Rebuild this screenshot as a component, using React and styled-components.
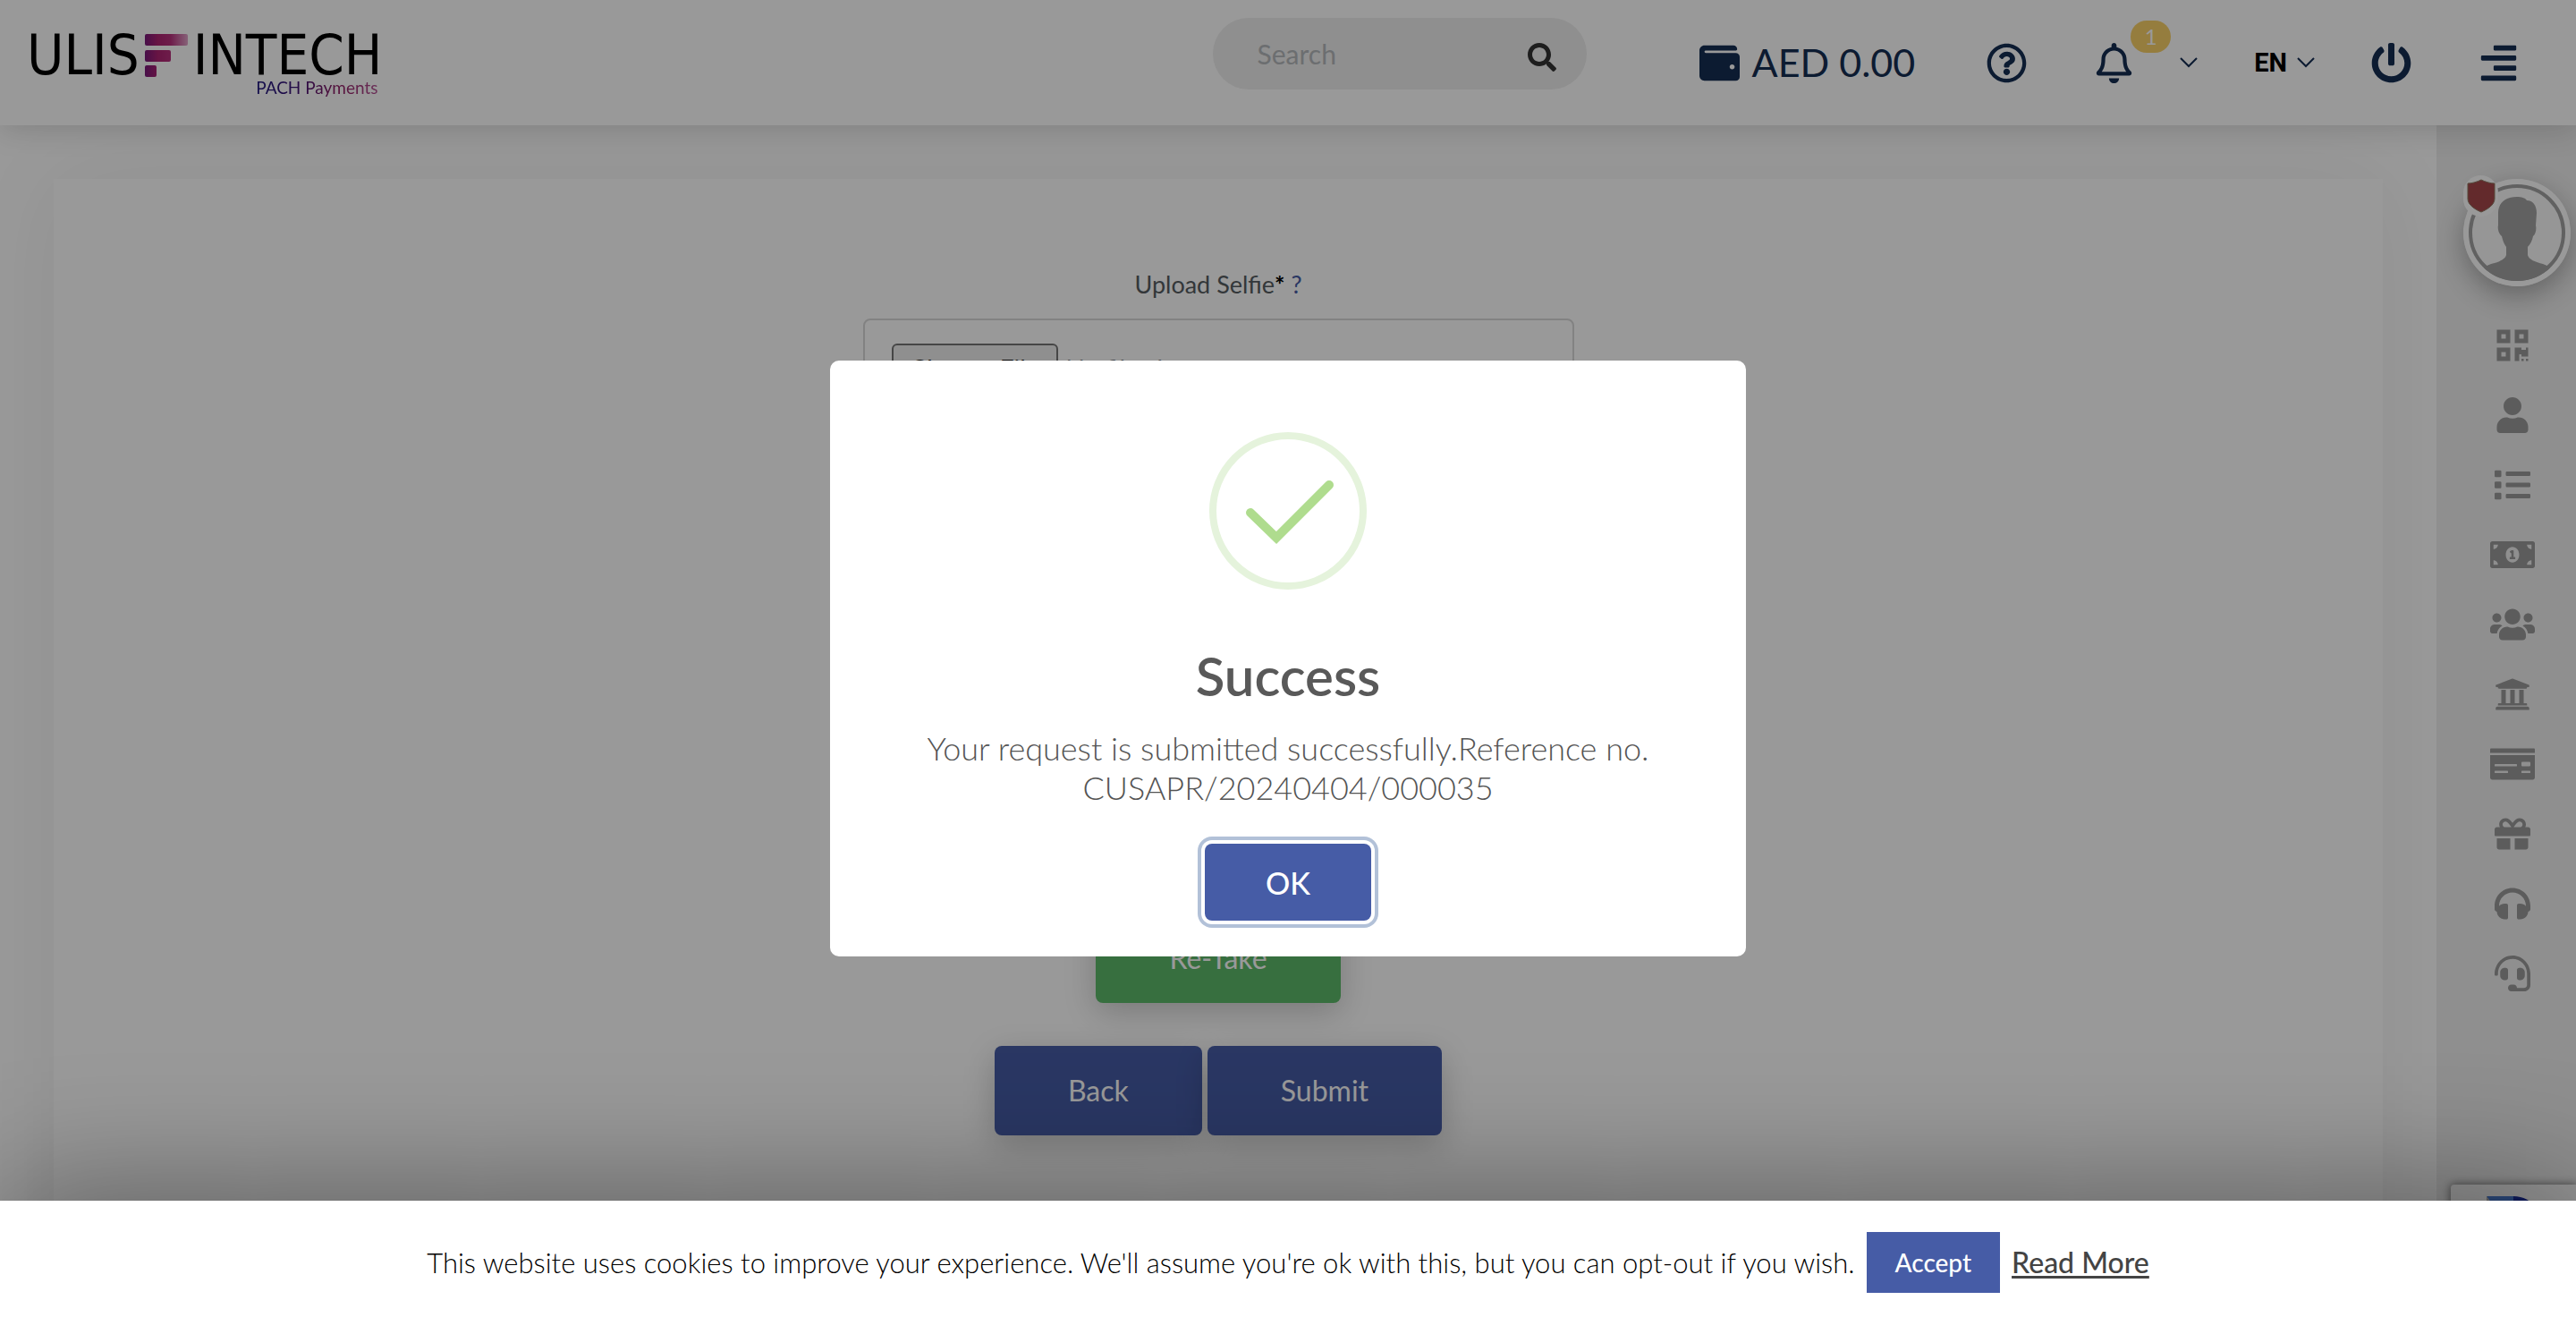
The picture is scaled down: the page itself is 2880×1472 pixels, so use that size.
import React from "react";
import styled, { createGlobalStyle } from "styled-components";
import {
  FaAlignRight,
  FaGift,
  FaHeadphones,
  FaHeadset,
  FaList,
  FaMoneyBillAlt,
  FaMoneyCheck,
  FaPowerOff,
  FaQrcode,
  FaRegBell,
  FaRegQuestionCircle,
  FaSearch,
  FaUniversity,
  FaUser,
  FaUsers,
  FaWallet,
} from "react-icons/fa";

const navy = "#142d53";
const accent = "#465ca6";

const GlobalStyle = createGlobalStyle`
  *, *::before, *::after { box-sizing: border-box; }
  body {
    margin: 0;
    overflow: hidden;
    background: #fff;
    font-family: Lato, "Open Sans", sans-serif;
    font-size: 28px;
  }
  button, input { font: inherit; }
  svg { display: block; flex: none; }
`;

const Page = styled.div`
  display: flex;
  flex-direction: column;
  height: 100vh;
  overflow: hidden;
`;

const Header = styled.header`
  position: relative;
  z-index: 1;
  flex: none;
  display: flex;
  align-items: center;
  height: 140px;
  padding: 0 64px 0 30px;
  background: #fff;
  color: ${navy};
  box-shadow: 0 4px 32px rgba(0, 0, 0, 0.16);
`;

const Brand = styled.a`
  display: flex;
  flex-direction: column;
  align-items: flex-end;
  color: #000;
  text-decoration: none;
`;

const BrandName = styled.span`
  display: flex;
  align-items: center;
  gap: 5px;
  height: 48px;
  margin-top: 8px;
  font: 63px/48px "DejaVu Sans Condensed", "Open Sans", sans-serif;
`;

const BrandTag = styled.span`
  padding-right: 5px;
  font: 19px/24px Lato, "Open Sans", sans-serif;
  color: transparent;
  background: linear-gradient(90deg, #211a80, #3a1378 30%, #8f1d63 65%, #b9579a);
  background-clip: text;
  -webkit-background-clip: text;
`;

const SearchBox = styled.label`
  align-self: flex-start;
  display: flex;
  align-items: center;
  width: 418px;
  height: 80px;
  margin: 20px 126px 0 auto;
  padding: 0 34px 0 50px;
  border-radius: 40px;
  background: #eee;
  color: #333;
  svg { margin-top: 8px; }
`;

const SearchInput = styled.input.attrs({ type: "search" })`
  flex: 1;
  min-width: 0;
  padding: 0;
  border: 0;
  outline: 0;
  background: none;
  font-size: 30px;
  line-height: 36px;
  &::placeholder { color: #b4b8bb; opacity: 1; }
`;

const HeaderTools = styled.nav`
  display: flex;
  align-items: center;
  gap: 75px;
`;

const ToolButton = styled.button`
  position: relative;
  display: flex;
  align-items: center;
  gap: ${(p) => p.$gap || 0}px;
  padding: 0;
  border: 0;
  background: none;
  color: ${navy};
  font-size: 45px;
  line-height: 54px;
`;

const Balance = styled.span`
  padding-right: 5px;
  font-size: 43px;
`;

const Badge = styled.span`
  position: absolute;
  left: 41px;
  top: -25px;
  width: 45px;
  border-radius: 18px;
  background: #f9d068;
  color: #fff;
  font-size: 24px;
  line-height: 36px;
  text-align: center;
`;

const MenuPair = styled.div`
  display: flex;
  align-items: center;
  gap: 63px;
`;

const LangCode = styled.span`
  color: #000;
  font: bold 29px/40px Roboto, sans-serif;
`;

const Body = styled.div`
  flex: 1;
  min-height: 0;
  display: flex;
`;

const Main = styled.main`
  flex: 1;
  min-width: 0;
  padding: 60px 60px 0;
  overflow: hidden;
`;

const Card = styled.section`
  display: flex;
  flex-direction: column;
  align-items: center;
  height: 100%;
  min-height: 1400px;
  padding-top: 98px;
  background: #fff;
  box-shadow: 0 0 100px rgba(0, 0, 0, 0.06);
`;

const FieldLabel = styled.div`
  color: #565d61;
  font-size: 27px;
  line-height: 40px;
  b { color: #000; font-weight: 700; }
  a { color: ${accent}; text-decoration: none; }
`;

const FileInput = styled.input.attrs({ type: "file" })`
  width: 795px;
  height: 110px;
  margin-top: 18px;
  padding: 26px 30px;
  border: 2px solid #d9d9d9;
  border-radius: 8px;
  color: #6c757d;
  font-size: 28px;
  &::file-selector-button {
    height: 56px;
    margin-right: 9px;
    padding: 0 19px;
    border: 2px solid #767676;
    border-radius: 6px;
    background: #efefef;
    color: #000;
    font: inherit;
  }
`;

const Preview = styled.div`
  width: 640px;
  height: 480px;
  margin: 35px 0 40px;
  background: #eee;
`;

const ActionRow = styled.div`
  display: flex;
  gap: 6px;
  margin-bottom: 48px;
`;

const ActionButton = styled.button`
  height: 100px;
  padding: 0 82px;
  border: 0;
  border-radius: 8px;
  background: ${(p) => (p.$tone === "green" ? "#5db969" : accent)};
  color: #fff;
  font-size: 32px;
  line-height: 40px;
  box-shadow: 0 10px 36px rgba(0, 0, 0, 0.2);
`;

const Sidebar = styled.aside`
  flex: none;
  display: flex;
  flex-direction: column;
  width: 156px;
  padding-top: 60px;
  background: #eee;
`;

const Profile = styled.a`
  position: relative;
  width: 120px;
  height: 120px;
  margin: 0 6px 27px auto;
  border-radius: 50%;
  box-shadow: 0 10px 30px rgba(0, 0, 0, 0.3);
`;

const ShieldBadge = styled.span`
  position: absolute;
  left: 0;
  top: -4px;
  display: flex;
  justify-content: center;
  width: 39px;
  height: 46px;
  padding-top: 4px;
  border-radius: 20px;
  background: #fff;
`;

const SideLink = styled.a`
  display: flex;
  align-items: center;
  justify-content: center;
  height: 78px;
  padding-left: 14px;
  color: #999;
  font-size: ${(p) => (p.$wide ? 50 : 40)}px;
`;

const Captcha = styled.div`
  position: fixed;
  right: 0;
  bottom: 28px;
  width: 140px;
  height: 120px;
  padding: 13px 0 0 36px;
  border-radius: 4px 0 0 4px;
  background: #f9f9f9;
  box-shadow: 0 0 10px 1px #808080;
`;

const Overlay = styled.div`
  position: fixed;
  inset: 0;
  z-index: 3;
  display: flex;
  align-items: center;
  justify-content: center;
  background: rgba(0, 0, 0, 0.4);
`;

const Dialog = styled.div`
  display: flex;
  flex-direction: column;
  align-items: center;
  width: 1024px;
  padding: 80px 40px 40px;
  border-radius: 10px;
  background: #fff;
  text-align: center;
`;

const DialogTitle = styled.h2`
  margin: 60px 0 0;
  color: #595959;
  font-size: 60px;
  font-weight: 600;
  line-height: 72px;
`;

const DialogText = styled.p`
  max-width: 900px;
  margin: 23px 0 41px;
  color: #545454;
  font-size: 36px;
  font-weight: 300;
  line-height: 44px;
`;

const OkButton = styled.button`
  width: 186px;
  height: 86px;
  border: 0;
  border-radius: 8px;
  background: ${accent};
  color: #fff;
  font-size: 34px;
  font-weight: 500;
  box-shadow: 0 0 0 4px #fff, 0 0 0 8px #b2c1d8;
`;

const CookieBar = styled.div`
  position: fixed;
  inset: auto 0 0;
  z-index: 4;
  display: flex;
  align-items: center;
  justify-content: center;
  gap: 13px;
  height: 130px;
  padding-top: 8px;
  background: #fff;
  color: #000;
  font-size: 31px;
  font-weight: 300;
  line-height: 40px;
`;

const CookieShade = styled.div`
  position: fixed;
  inset: auto 0 0;
  z-index: 2;
  height: 130px;
  box-shadow: 0 0 150px rgba(0, 0, 0, 0.45);
`;

const AcceptButton = styled.button`
  height: 68px;
  padding: 0 32px;
  border: 0;
  background: ${accent};
  color: #fff;
  font-size: 28px;
  font-weight: 500;
`;

const ReadMore = styled.a`
  color: #444;
  font-size: 32px;
  font-weight: 500;
  text-decoration: underline;
  text-decoration-thickness: 3px;
  text-underline-offset: 3px;
`;

const BrandMark = () => (
  <svg width="50" height="50" viewBox="0 0 50 50" aria-hidden="true">
    <defs>
      <linearGradient id="bars" gradientUnits="userSpaceOnUse" x1="1" y1="0" x2="49" y2="0">
        <stop offset="0" stopColor="#77187a" />
        <stop offset="0.3" stopColor="#ad2271" />
        <stop offset="0.6" stopColor="#b7307c" />
        <stop offset="1" stopColor="#e0a3c8" />
      </linearGradient>
    </defs>
    <g fill="url(#bars)">
      <rect x="1" y="1" width="48" height="13" rx="2" />
      <rect x="1" y="19" width="29" height="13" rx="2" />
      <rect x="1" y="36" width="13" height="13" rx="2" />
    </g>
  </svg>
);

const Chevron = () => (
  <svg width="20" height="12" viewBox="0 0 20 12" fill="none" stroke={navy} strokeWidth="2" aria-hidden="true">
    <path d="M1 1l9 9 9-9" />
  </svg>
);

const Avatar = () => (
  <svg width="120" height="120" viewBox="0 0 120 120" aria-hidden="true">
    <defs>
      <clipPath id="face"><circle cx="60" cy="60" r="54" /></clipPath>
    </defs>
    <circle cx="60" cy="60" r="60" fill="#fff" />
    <circle cx="60" cy="60" r="52" fill="#fafafa" stroke="#a2a2a2" strokeWidth="4" />
    <path
      clipPath="url(#face)"
      fill="#a2a2a2"
      d="M60 20c5 0 9 1 11 4 7 0 11 6 11 14l-1 14c1 4 0 10-3 12-1 5-3 9-6 12v9c1 5 9 8 17 10 5 2 9 4 11 8v20H20V103c2-4 6-6 11-8 8-2 16-5 17-10v-9c-3-4-4-8-5-12-3-2-5-8-4-12V38c0-11 8-18 21-18z"
    />
  </svg>
);

const Shield = () => (
  <svg width="32" height="38" viewBox="0 0 32 38" aria-hidden="true">
    <path d="M16 1C12 3 6 5 1 5v17c0 7 8 12 15 15 7-3 15-8 15-15V5C26 5 20 3 16 1z" fill="#a5464a" stroke="#8d7a62" />
  </svg>
);

const SuccessMark = () => (
  <svg width="176" height="176" viewBox="0 0 176 176" fill="none" aria-hidden="true">
    <circle cx="88" cy="88" r="84" stroke="#e5f3dc" strokeWidth="8" />
    <path d="M46 90l29 28 59-59" stroke="#afdc8e" strokeWidth="10" strokeLinecap="round" />
  </svg>
);

const CaptchaMark = () => (
  <svg width="64" height="64" viewBox="0 0 64 64" aria-hidden="true">
    <path d="M4 0h30v14a18 18 0 0 0-15 8z" fill="#4a7bd0" />
    <path d="M34 0a32 32 0 0 1 26 14v17H42l6-6a18 18 0 0 0-14-11z" fill="#1c2f9c" />
    <path d="M4 0v31a32 32 0 0 0 56 14L48 36a18 18 0 0 1-29-14z" fill="#ababab" />
  </svg>
);

const sideItems = [
  { label: "QR code", Icon: FaQrcode },
  { label: "Profile", Icon: FaUser },
  { label: "Transactions", Icon: FaList },
  { label: "Send money", Icon: FaMoneyBillAlt, wide: true },
  { label: "Beneficiaries", Icon: FaUsers, wide: true },
  { label: "Bank accounts", Icon: FaUniversity },
  { label: "Cards", Icon: FaMoneyCheck, wide: true },
  { label: "Rewards", Icon: FaGift },
  { label: "Help", Icon: FaHeadphones },
  { label: "Support", Icon: FaHeadset },
];

export default function App() {
  return (
    <>
      <GlobalStyle />
      <Page>
        <Header>
          <Brand href="#">
            <BrandName>
              ULIS
              <BrandMark />
              INTECH
            </BrandName>
            <BrandTag>PACH Payments</BrandTag>
          </Brand>
          <SearchBox>
            <SearchInput placeholder="Search" aria-label="Search" />
            <FaSearch size={32} />
          </SearchBox>
          <HeaderTools>
            <ToolButton $gap={14}>
              <FaWallet />
              <Balance>AED 0.00</Balance>
            </ToolButton>
            <ToolButton aria-label="Help">
              <FaRegQuestionCircle />
            </ToolButton>
            <MenuPair>
              <ToolButton $gap={51} aria-label="Notifications">
                <FaRegBell />
                <Badge>1</Badge>
                <Chevron />
              </ToolButton>
              <ToolButton $gap={11}>
                <LangCode>EN</LangCode>
                <Chevron />
              </ToolButton>
              <ToolButton aria-label="Log out">
                <FaPowerOff />
              </ToolButton>
            </MenuPair>
            <ToolButton aria-label="Menu">
              <FaAlignRight />
            </ToolButton>
          </HeaderTools>
        </Header>
        <Body>
          <Main>
            <Card>
              <FieldLabel>
                <label htmlFor="selfie">Upload Selfie<b>*</b></label> <a href="#">?</a>
              </FieldLabel>
              <FileInput id="selfie" />
              <Preview />
              <ActionRow>
                <ActionButton $tone="green">Re-Take</ActionButton>
              </ActionRow>
              <ActionRow>
                <ActionButton>Back</ActionButton>
                <ActionButton>Submit</ActionButton>
              </ActionRow>
            </Card>
          </Main>
          <Sidebar>
            <Profile href="#" aria-label="Account">
              <Avatar />
              <ShieldBadge>
                <Shield />
              </ShieldBadge>
            </Profile>
            {sideItems.map(({ label, Icon, wide }) => (
              <SideLink key={label} href="#" aria-label={label} $wide={wide}>
                <Icon />
              </SideLink>
            ))}
          </Sidebar>
        </Body>
      </Page>
      <Captcha>
        <CaptchaMark />
      </Captcha>
      <CookieShade />
      <Overlay>
        <Dialog role="dialog" aria-modal="true" aria-labelledby="dialog-title">
          <SuccessMark />
          <DialogTitle id="dialog-title">Success</DialogTitle>
          <DialogText>
            Your request is submitted successfully.Reference no. CUSAPR/20240404/000035
          </DialogText>
          <OkButton>OK</OkButton>
        </Dialog>
      </Overlay>
      <CookieBar>
        <span>
          This website uses cookies to improve your experience. We'll assume you're ok with this, but you can
          opt-out if you wish.
        </span>
        <AcceptButton>Accept</AcceptButton>
        <ReadMore href="#">Read More</ReadMore>
      </CookieBar>
    </>
  );
}
